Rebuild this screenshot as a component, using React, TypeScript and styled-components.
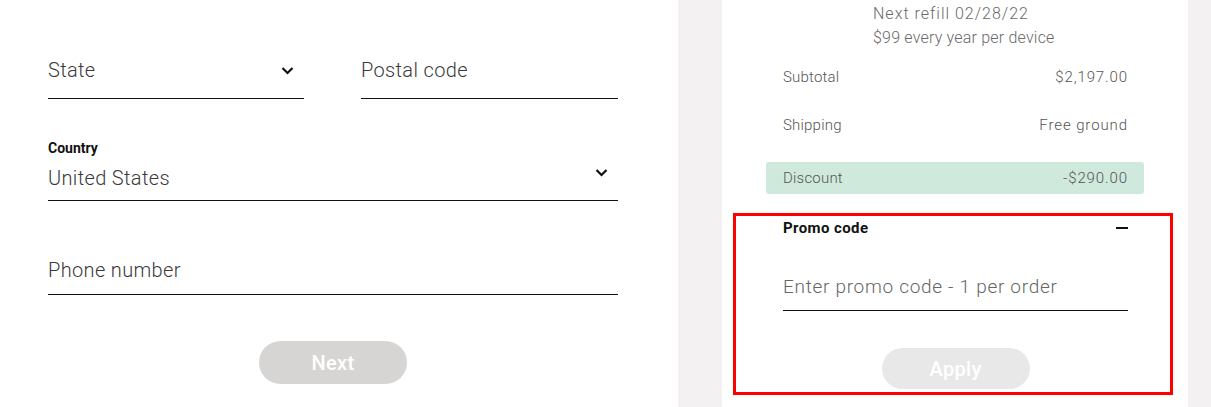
import React from "react";
import styled, { createGlobalStyle } from "styled-components";

const GlobalStyle = createGlobalStyle`
  html, body {
    margin: 0;
    padding: 0;
    background: #ffffff;
  }
  body {
    font-family: Roboto, "Liberation Sans", Arial, sans-serif;
    color: #333;
  }
  * { box-sizing: border-box; }
`;

const Page = styled.div`
  display: flex;
  width: 1211px;
  height: 407px;
  overflow: hidden;
  background: #ffffff;
`;

/* ---------- address form ---------- */

const FormColumn = styled.div`
  width: 678px;
  flex: none;
  padding: 56px 60px 0 48px;
  display: flex;
  flex-direction: column;
`;

const FieldRow = styled.div`
  display: grid;
  grid-template-columns: 256px 257px;
  justify-content: space-between;
`;

const FieldGroup = styled.div<{ $top?: number }>`
  display: flex;
  flex-direction: column;
  margin-top: ${(p) => p.$top ?? 0}px;
`;

const FieldLabel = styled.div`
  font-size: 14px;
  font-weight: 700;
  line-height: 16px;
  color: #111;
  margin-bottom: 8px;
`;

const Field = styled.div<{ $pad: number }>`
  display: flex;
  align-items: center;
  justify-content: space-between;
  padding-bottom: ${(p) => p.$pad}px;
  border-bottom: 1.5px solid #111;
`;

const FieldText = styled.span`
  font-size: 20px;
  font-weight: 300;
  line-height: 28px;
  letter-spacing: 0.35px;
  color: #3a3a3a;
`;

const Chevron = styled.svg<{ $lift?: number }>`
  width: 13px;
  height: 9px;
  margin-right: 10px;
  transform: translateY(${(p) => -(p.$lift ?? 0)}px);
`;

const PillButton = styled.button<{ $bg: string; $h: number }>`
  align-self: center;
  width: 148px;
  height: ${(p) => p.$h}px;
  border: none;
  border-radius: 22px;
  background: ${(p) => p.$bg};
  color: #ffffff;
  font-family: Roboto, "Liberation Sans", Arial, sans-serif;
  font-size: 20px;
  font-weight: 500;
  letter-spacing: 0.3px;
  padding: 0;
  cursor: default;
`;

/* ---------- order summary ---------- */

const SummaryColumn = styled.div`
  flex: 1;
  background: #f3f1f1;
  padding: 0 23px 0 44px;
`;

const SummaryCard = styled.div`
  height: 100%;
  background: #ffffff;
  padding: 2px 60px 0 61px;
  display: flex;
  flex-direction: column;
`;

const RefillNote = styled.div`
  margin-left: 90px;
  display: flex;
  flex-direction: column;
`;

const RefillLine = styled.span<{ $spacing: number }>`
  font-size: 16px;
  font-weight: 300;
  line-height: 24px;
  letter-spacing: ${(p) => p.$spacing}px;
  color: #6a6a6a;
`;

const SummaryRow = styled.div<{ $highlight?: boolean; $top?: number }>`
  display: flex;
  justify-content: space-between;
  align-items: center;
  height: ${(p) => (p.$highlight ? 32 : 48)}px;
  margin-top: ${(p) => p.$top ?? 0}px;
  font-size: 15px;
  font-weight: 300;
  color: #555;
  ${(p) =>
    p.$highlight &&
    `
    background: #cfe9dc;
    border-radius: 3px;
    margin: 13px -16px 0 -17px;
    padding: 0 16px 0 17px;
  `}
`;

const RowLabel = styled.span`
  letter-spacing: 0.2px;
`;

const RowValue = styled.span`
  letter-spacing: 0.9px;
`;

const PromoBox = styled.div`
  margin: 19px -45px 0 -50px;
  padding: 0 42px 0 47px;
  border: 3px solid #ff0000;
  height: 182px;
  display: flex;
  flex-direction: column;
`;

const PromoHeader = styled.div`
  display: flex;
  justify-content: space-between;
  align-items: center;
  height: 24px;
`;

const PromoTitle = styled.span`
  font-size: 15px;
  font-weight: 700;
  letter-spacing: 0.4px;
  color: #111;
`;

const Minus = styled.span`
  width: 12px;
  height: 2px;
  background: #111;
`;

const PromoInput = styled.div`
  margin-top: 34px;
  padding-bottom: 10px;
  border-bottom: 1.5px solid #111;
  font-size: 19px;
  font-weight: 300;
  line-height: 26px;
  letter-spacing: 0.7px;
  color: #666;
`;

const ApplyWrap = styled.div`
  display: flex;
  justify-content: center;
  margin-top: 37px;
`;

const ChevronIcon = ({ lift }: { lift?: number }) => (
  <Chevron $lift={lift} viewBox="0 0 13 9">
    <polyline
      points="1.5,2 6.5,7 11.5,2"
      fill="none"
      stroke="#111"
      strokeWidth="2.2"
    />
  </Chevron>
);

const totals = [
  { label: "Subtotal", value: "$2,197.00" },
  { label: "Shipping", value: "Free ground" },
];

export default function App() {
  return (
    <>
      <GlobalStyle />
      <Page>
        <FormColumn>
          <FieldRow>
            <Field $pad={14}>
              <FieldText>State</FieldText>
              <ChevronIcon />
            </Field>
            <Field $pad={14}>
              <FieldText>Postal code</FieldText>
            </Field>
          </FieldRow>

          <FieldGroup $top={41}>
            <FieldLabel>Country</FieldLabel>
            <Field $pad={8}>
              <FieldText>United States</FieldText>
              <ChevronIcon lift={6} />
            </Field>
          </FieldGroup>

          <FieldGroup $top={55}>
            <Field $pad={10}>
              <FieldText>Phone number</FieldText>
            </Field>
          </FieldGroup>

          <FieldGroup $top={46}>
            <PillButton $bg="#d7d5d4" $h={43}>
              Next
            </PillButton>
          </FieldGroup>
        </FormColumn>

        <SummaryColumn>
          <SummaryCard>
            <RefillNote>
              <RefillLine $spacing={1}>Next refill 02/28/22</RefillLine>
              <RefillLine $spacing={0.2}>$99 every year per device</RefillLine>
            </RefillNote>
            {totals.map((t, i) => (
              <SummaryRow key={t.label} $top={i === 0 ? 3 : 0}>
                <RowLabel>{t.label}</RowLabel>
                <RowValue>{t.value}</RowValue>
              </SummaryRow>
            ))}
            <SummaryRow $highlight>
              <RowLabel>Discount</RowLabel>
              <RowValue>-$290.00</RowValue>
            </SummaryRow>

            <PromoBox>
              <PromoHeader>
                <PromoTitle>Promo code</PromoTitle>
                <Minus />
              </PromoHeader>
              <PromoInput>Enter promo code - 1 per order</PromoInput>
              <ApplyWrap>
                <PillButton $bg="#e8e8e8" $h={41}>
                  Apply
                </PillButton>
              </ApplyWrap>
            </PromoBox>
          </SummaryCard>
        </SummaryColumn>
      </Page>
    </>
  );
}
